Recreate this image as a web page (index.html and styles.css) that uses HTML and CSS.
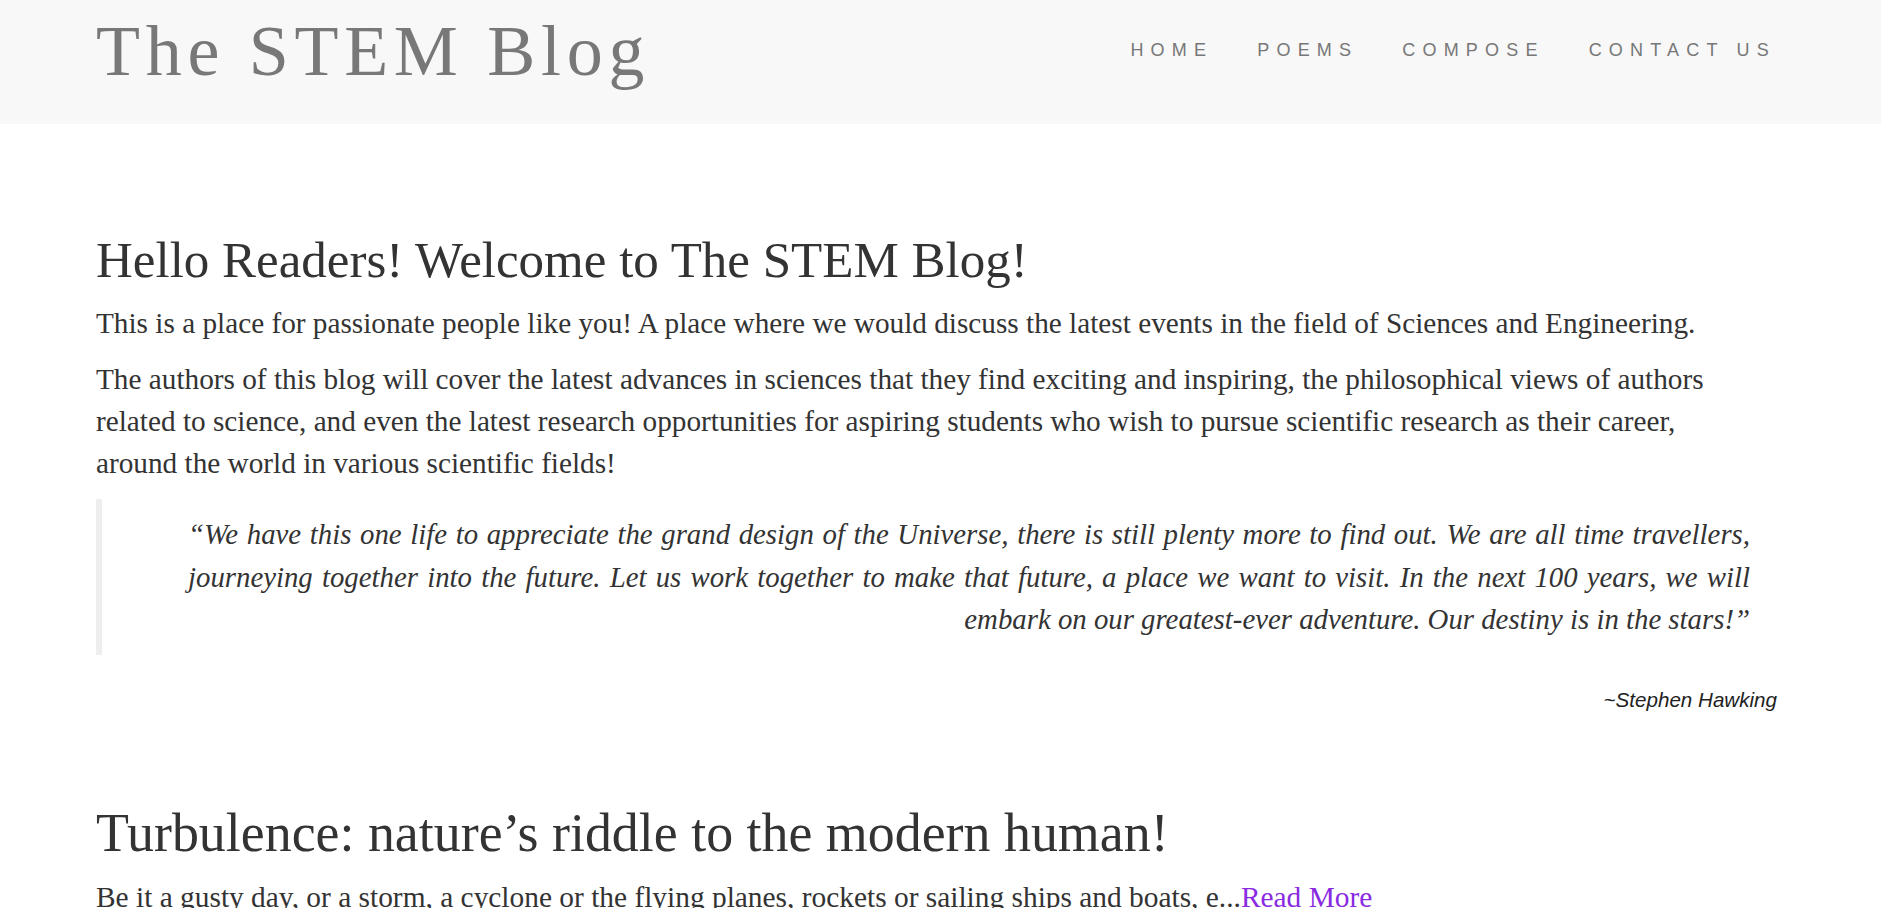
FILE: index.html
```html
<!DOCTYPE html>
<html lang="en">
<head>
<meta charset="utf-8">
<title>The STEM Blog</title>
<link rel="stylesheet" href="styles.css">
</head>
<body>
<header class="site-header">
  <div class="header-inner">
    <a class="brand" href="#">The STEM Blog</a>
    <nav class="main-nav">
      <ul class="nav-list">
        <li><a href="#">Home</a></li>
        <li><a href="#">Poems</a></li>
        <li><a href="#">Compose</a></li>
        <li><a href="#">Contact Us</a></li>
      </ul>
    </nav>
  </div>
</header>
<main class="content">
  <section class="intro">
    <h1 class="post-title intro-title">Hello Readers! Welcome to The STEM Blog!</h1>
    <p class="post-text intro-text">This is a place for passionate people like you! A place where we would discuss the latest events in the field of Sciences and Engineering.</p>
    <p class="post-text intro-text">The authors of this blog will cover the latest advances in sciences that they find exciting and inspiring, the philosophical views of authors related to science, and even the latest research opportunities for aspiring students who wish to pursue scientific research as their career, around the world in various scientific fields!</p>
    <blockquote class="quote">“We have this one life to appreciate the grand design of the Universe, there is still plenty more to find out. We are all time travellers, journeying together into the future. Let us work together to make that future, a place we want to visit. In the next 100 years, we will embark on our greatest-ever adventure. Our destiny is in the stars!”</blockquote>
    <p class="attribution">~Stephen Hawking</p>
  </section>
  <article class="post">
    <h2 class="post-title article-title">Turbulence: nature’s riddle to the modern human!</h2>
    <p class="post-text article-text">Be it a gusty day, or a storm, a cyclone or the flying planes, rockets or sailing ships and boats, e...<a class="read-more" href="#">Read More</a></p>
  </article>
</main>
</body>
</html>
```
FILE: styles.css
```css
html, body {
  margin: 0;
  padding: 0;
}
body {
  background: #ffffff;
  color: #333333;
  font-family: "Liberation Serif", "Times New Roman", serif;
}
.site-header {
  background: #f8f8f8;
  height: 124px;
}
.header-inner {
  display: flex;
  justify-content: space-between;
  align-items: flex-start;
  padding: 15px 96px 0 96px;
}
.brand {
  font-family: "Liberation Serif", serif;
  font-size: 72px;
  line-height: 72px;
  letter-spacing: 5.7px;
  color: #787878;
  text-decoration: none;
}
.main-nav {
  padding-top: 26px;
  padding-right: 9px;
}
.nav-list {
  list-style: none;
  margin: 0;
  padding: 0;
  display: flex;
  gap: 44px;
}
.nav-list a {
  font-family: "Liberation Sans", Arial, sans-serif;
  font-size: 18px;
  line-height: 18px;
  letter-spacing: 7.2px;
  text-transform: uppercase;
  color: #777777;
  text-decoration: none;
}
.content {
  padding: 105px 101px 0 96px;
}
.post-title {
  margin: 0;
  font-weight: normal;
  line-height: 62px;
  color: #333333;
}
.intro-title {
  font-size: 51px;
}
.article-title {
  font-size: 53.9px;
}
.post-text {
  margin: 11px 0 14px 0;
  line-height: 42px;
}
.intro-text {
  font-size: 29.25px;
  padding-right: 40px;
}
.intro .post-text + .post-text {
  margin-top: 0;
}
.quote {
  margin: 15px -5px 0 0;
  border-left: 6px solid #eeeeee;
  padding: 14px 35px 14px 86px;
  font-style: italic;
  font-size: 28.8px;
  line-height: 42.5px;
  text-align: justify;
  text-align-last: right;
}
.attribution {
  margin: 31px -5px 0 0;
  padding-right: 8px;
  text-align: right;
  font-family: "Liberation Sans", Arial, sans-serif;
  font-style: italic;
  font-size: 20.6px;
  line-height: 28.8px;
  color: #222222;
}
.post {
  margin-top: 88px;
}
.article-text {
  margin-top: 12px;
  font-size: 29.4px;
}
.read-more {
  color: #8a2be2;
  text-decoration: none;
}
```
